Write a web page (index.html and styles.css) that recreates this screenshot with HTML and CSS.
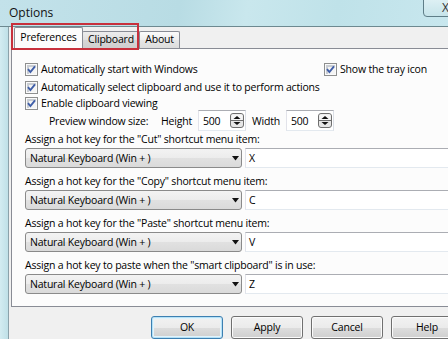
FILE: index.html
```html
<!DOCTYPE html>
<html>
<head>
<meta charset="utf-8">
<title>Options</title>
<link rel="stylesheet" href="styles.css">
</head>
<body>
<div class="window">
  <div class="titlebar"><span class="title">Options</span></div>
  <div class="close"><span>X</span></div>
  <div class="frame">
    <div class="frame-edge"></div>
    <div class="client">
      <div class="tabs">
        <div class="tab active w-pref">Preferences</div>
        <div class="tab dark w-clip">Clipboard</div>
        <div class="tab w-about">About</div>
      </div>
      <div class="panel">
        <div class="row row-a">
          <label class="check"><span class="cb"><svg width="9" height="9" viewBox="0 0 9 9"><path d="M1 4.2 L3.4 7 L8 1.4" fill="none" stroke="#3f5ea8" stroke-width="1.9"/></svg></span>Automatically start with Windows</label>
          <label class="check"><span class="cb"><svg width="9" height="9" viewBox="0 0 9 9"><path d="M1 4.2 L3.4 7 L8 1.4" fill="none" stroke="#3f5ea8" stroke-width="1.9"/></svg></span>Show the tray icon</label>
        </div>
        <div class="row row-b">
          <label class="check"><span class="cb"><svg width="9" height="9" viewBox="0 0 9 9"><path d="M1 4.2 L3.4 7 L8 1.4" fill="none" stroke="#3f5ea8" stroke-width="1.9"/></svg></span>Automatically select clipboard and use it to perform actions</label>
        </div>
        <div class="row row-c">
          <label class="check"><span class="cb"><svg width="9" height="9" viewBox="0 0 9 9"><path d="M1 4.2 L3.4 7 L8 1.4" fill="none" stroke="#3f5ea8" stroke-width="1.9"/></svg></span>Enable clipboard viewing</label>
        </div>
        <div class="row preview">
          <span class="pv-label">Preview window size:</span>
          <span class="pv-h">Height</span>
          <span class="spin"><span class="spin-val">500</span><svg width="14" height="15" viewBox="0 0 14 15"><rect x="0.5" y="0.5" width="13" height="14" rx="2.5" fill="#e6e6e6" stroke="#6e6e6e"/><rect x="1.5" y="1.5" width="11" height="5.5" rx="1" fill="#f6f6f6"/><line x1="1" y1="7.5" x2="13" y2="7.5" stroke="#6e6e6e"/><path d="M3.5 6 L7 3 L10.5 6 Z" fill="#111"/><path d="M3.5 9 L7 12 L10.5 9 Z" fill="#111"/></svg></span>
          <span class="pv-w">Width</span>
          <span class="spin"><span class="spin-val">500</span><svg width="14" height="15" viewBox="0 0 14 15"><rect x="0.5" y="0.5" width="13" height="14" rx="2.5" fill="#e6e6e6" stroke="#6e6e6e"/><rect x="1.5" y="1.5" width="11" height="5.5" rx="1" fill="#f6f6f6"/><line x1="1" y1="7.5" x2="13" y2="7.5" stroke="#6e6e6e"/><path d="M3.5 6 L7 3 L10.5 6 Z" fill="#111"/><path d="M3.5 9 L7 12 L10.5 9 Z" fill="#111"/></svg></span>
        </div>

        <div class="group">
          <div class="glabel">Assign a hot key for the "Cut" shortcut menu item:</div>
          <div class="gfields">
            <div class="combo"><span>Natural Keyboard (Win + )</span><svg width="7" height="5" viewBox="0 0 7 5"><path d="M0 0 H7 L3.5 4.5 Z" fill="#111"/></svg></div>
            <div class="hk">X</div>
          </div>
        </div>
        <div class="group">
          <div class="glabel">Assign a hot key for the "Copy" shortcut menu item:</div>
          <div class="gfields">
            <div class="combo"><span>Natural Keyboard (Win + )</span><svg width="7" height="5" viewBox="0 0 7 5"><path d="M0 0 H7 L3.5 4.5 Z" fill="#111"/></svg></div>
            <div class="hk">C</div>
          </div>
        </div>
        <div class="group">
          <div class="glabel">Assign a hot key for the "Paste" shortcut menu item:</div>
          <div class="gfields">
            <div class="combo"><span>Natural Keyboard (Win + )</span><svg width="7" height="5" viewBox="0 0 7 5"><path d="M0 0 H7 L3.5 4.5 Z" fill="#111"/></svg></div>
            <div class="hk">V</div>
          </div>
        </div>
        <div class="group">
          <div class="glabel">Assign a hot key to paste when the "smart clipboard" is in use:</div>
          <div class="gfields">
            <div class="combo"><span>Natural Keyboard (Win + )</span><svg width="7" height="5" viewBox="0 0 7 5"><path d="M0 0 H7 L3.5 4.5 Z" fill="#111"/></svg></div>
            <div class="hk">Z</div>
          </div>
        </div>
      </div>
      <div class="buttons">
        <div class="btn default">OK</div>
        <div class="btn">Apply</div>
        <div class="btn">Cancel</div>
        <div class="btn">Help</div>
      </div>
    </div>
  </div>
  <div class="highlight"></div>
</div>
</body>
</html>
```

FILE: styles.css
```css
* { box-sizing: border-box; }
html, body {
  margin: 0;
  padding: 0;
}
body {
  width: 448px;
  height: 339px;
  overflow: hidden;
  font-family: "Open Sans", "Noto Sans", sans-serif;
  font-size: 10.5px;
  letter-spacing: -0.2px;
  color: #000;
  background: #f0f0f0;
}
.window {
  position: relative;
  width: 448px;
  height: 339px;
  overflow: hidden;
  display: flex;
  flex-direction: column;
}
.titlebar {
  flex: none;
  height: 27px;
  background: linear-gradient(100deg, #c3e2ea 0%, #b8dce4 40%, #c9e7ed 55%, #bfe2e9 75%, #c8e7ee 100%);
  border-bottom: 1px solid #6d8990;
  display: flex;
  align-items: center;
  padding-left: 9px;
}
.title {
  font-size: 12px;
  letter-spacing: 0;
  color: #111;
  margin-top: -2px;
}
.close {
  position: absolute;
  top: -1px;
  left: 423px;
  width: 40px;
  height: 18px;
  border: 1px solid #5f7e88;
  border-radius: 0 0 0 4px;
  background: linear-gradient(#ddf0f4, #c6e4ea);
  padding-left: 18px;
  font-size: 12px;
  line-height: 16px;
  color: #333;
}
.frame {
  flex: 1;
  display: flex;
  min-height: 0;
}
.frame-edge {
  flex: none;
  width: 9px;
  background: linear-gradient(90deg, #d3ecf1, #bfe0e7);
  border-right: 1px solid #8ba2aa;
}
.client {
  flex: none;
  width: 480px;
  display: flex;
  flex-direction: column;
  padding-left: 2px;
  background: #f0f0f0;
}
.tabs {
  flex: none;
  height: 21px;
  display: flex;
  align-items: flex-end;
  padding-left: 3px;
  position: relative;
  z-index: 1;
}
.tab {
  flex: none;
  height: 17px;
  border: 1px solid #898c95;
  border-bottom: none;
  border-radius: 2px 2px 0 0;
  background: linear-gradient(#fbfbfb, #eeeeee 50%, #e6e6e6 51%, #dcdcdc);
  text-align: center;
  line-height: 15px;
  margin-left: -1px;
  white-space: nowrap;
}
.tab.dark {
  background: linear-gradient(#ececec, #e0e0e0 50%, #d6d6d6 51%, #cfcfcf);
}
.tab.active {
  height: 22px;
  margin-bottom: -1px;
  margin-left: 0;
  background: #fcfcfc;
  line-height: 19px;
  position: relative;
  z-index: 2;
}
.w-pref { width: 69px; }
.w-clip { width: 58px; }
.w-about { width: 41px; }
.panel {
  flex: none;
  width: 470px;
  border: 1px solid #898c95;
  background: #fcfcfc;
  padding: 11px 0 12px 13px;
}
.row {
  display: flex;
  align-items: center;
  white-space: nowrap;
}
.row-a {
  height: 18px;
  display: grid;
  grid-template-columns: 299px auto;
  align-items: center;
}
.row-b { height: 18px; }
.row-c { height: 14px; }
.check {
  display: flex;
  align-items: center;
  white-space: nowrap;
}
.cb {
  flex: none;
  width: 13px;
  height: 13px;
  border: 1px solid #8e8f8f;
  background: #f4f4f4;
  margin-right: 3px;
  display: flex;
  align-items: center;
  justify-content: center;
  box-shadow: inset 0 0 0 1px #fafafa, inset 1px 1px 0 2px #c9cdd3;
}
.cb svg { display: block; }
.preview {
  height: 21px;
  padding-left: 24px;
}
.pv-label { flex: none; width: 112px; }
.pv-h { flex: none; width: 37px; }
.pv-w { flex: none; width: 34px; }
.spin {
  flex: none;
  display: flex;
  align-items: center;
  width: 48px;
  height: 21px;
  border: 1px solid #abadb3;
  border-color: #abadb3 #dbdfe6 #e3e9ef #e2e3ea;
  background: #fff;
  padding-left: 4px;
  margin-right: 6px;
}
.spin-val { flex: none; width: 27px; }
.group {
  margin-bottom: 5px;
}
.group:last-child { margin-bottom: 0; }
.glabel {
  height: 16px;
  line-height: 16px;
  white-space: nowrap;
}
.gfields {
  display: flex;
  margin-top: 1px;
  height: 20px;
}
.combo {
  flex: none;
  width: 217px;
  height: 20px;
  border: 1px solid #8a8a8a;
  border-radius: 3px;
  background: linear-gradient(#f3f3f3, #ececec 50%, #e1e1e1 51%, #dadada);
  display: flex;
  align-items: center;
  justify-content: space-between;
  padding: 0 2px 0 4px;
  white-space: nowrap;
}
.combo svg { display: block; }
.hk {
  flex: none;
  width: 210px;
  height: 20px;
  margin-left: 3px;
  border: 1px solid #abadb3;
  border-color: #abadb3 #dbdfe6 #e3e9ef #e2e3ea;
  background: #fff;
  padding-left: 3px;
  line-height: 18px;
}
.buttons {
  flex: none;
  display: flex;
  gap: 8px;
  margin-top: 9px;
  padding-left: 140px;
}
.btn {
  flex: none;
  width: 72px;
  height: 23px;
  border: 1px solid #707070;
  border-radius: 3px;
  background: linear-gradient(#f2f2f2, #ebebeb 50%, #dddddd 51%, #cfcfcf);
  text-align: center;
  line-height: 21px;
  box-shadow: inset 0 0 0 1px #fbfbfb;
}
.btn.default {
  border-color: #3c7fb1;
  box-shadow: inset 0 0 0 1px #b5e1f7, inset 0 0 0 2px #e2f3fb;
}
.highlight {
  position: absolute;
  left: 11px;
  top: 23px;
  width: 128px;
  height: 27px;
  border: 2px solid #c8303c;
  z-index: 5;
}
```
